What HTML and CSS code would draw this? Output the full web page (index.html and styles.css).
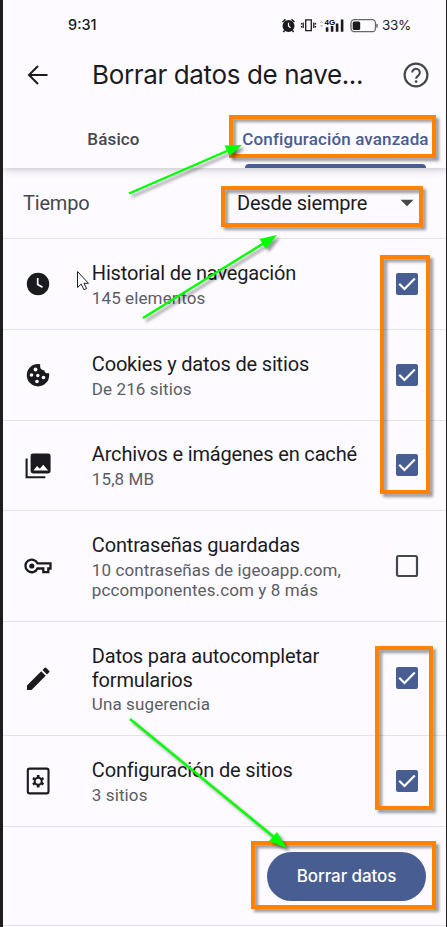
FILE: index.html
```html
<!DOCTYPE html>
<html lang="es">
<head>
<meta charset="utf-8">
<title>Borrar datos de navegación</title>
<link rel="stylesheet" href="styles.css">
</head>
<body>
<div class="screen">
  <header class="top">
    <div class="status">
      <span class="clock">9:31</span>
      <svg class="status-icons" width="100" height="20" viewBox="0 0 100 20">
        <circle cx="7.5" cy="11" r="6" fill="#1b1b1f"/>
        <path d="M1.500 7 4.500 4.400M10.500 4.400 13.500 7M3.500 15.500 2.500 17M11.500 15.500 12.500 17" stroke="#1b1b1f" stroke-width="1.500" fill="none"/>
        <path d="M7.500 7.800V11L9.500 12.800" stroke="#fff" stroke-width="1.200" fill="none"/>
        <path d="M24.700 4.900h5.600v10.800h-5.600zM22.200 7.500v5.500M32.800 7.500v5.500M20.500 8v1.500M20.500 11v1.500M34.500 8v1.500M34.500 11v1.500" stroke="#1b1b1f" stroke-width="1.300" fill="none"/>
        <path d="M38.500 8 40.500 5.500 42.500 8M38.500 10 40.500 12.500 42.500 10" fill="#c8c8cd"/>
        <text class="net" x="43.500" y="10">4G</text>
        <path d="M44.800 12.300h2.600v4.400h-2.600zM49.800 11h2.600v5.700h-2.600zM54.800 8.500h2.600v8.200h-2.600zM59.800 4.500h2.600v12.200h-2.600z" fill="#1b1b1f"/>
        <rect x="70" y="4.700" width="24.500" height="12" rx="3.500" fill="none" stroke="#68686c" stroke-width="1.300"/>
        <rect x="71.700" y="6.500" width="7.500" height="8.400" rx="1.500" fill="#1b1b1f"/>
        <path d="M96 9v3.500" stroke="#68686c" stroke-width="1.500"/>
      </svg>
      <span class="percent">33%</span>
    </div>
    <div class="appbar">
      <svg class="back" width="22" height="22" viewBox="0 0 22 22"><path d="M20.500 11H2.500M11 2 2 11l9 9" fill="none" stroke="#1b1b1f" stroke-width="2"/></svg>
      <h1 class="title">Borrar datos de nave...</h1>
      <svg class="help" width="26" height="26" viewBox="0 0 26 26"><circle cx="13" cy="13" r="11.400" fill="none" stroke="#44474e" stroke-width="2.200"/><path d="M9.200 10.500a3.800 3.800 0 1 1 6.300 2.900c-1.500 1.200-2.400 1.800-2.400 3.400" fill="none" stroke="#44474e" stroke-width="2.100"/><circle cx="13.100" cy="19.600" r="1.400" fill="#44474e"/></svg>
    </div>
    <nav class="tabs">
      <div class="tab">Básico</div>
      <div class="tab active">Configuración avanzada</div>
    </nav>
  </header>
  <main>
    <div class="time">
      <span class="time-label">Tiempo</span>
      <span class="time-value">Desde siempre</span>
      <svg class="caret" width="14" height="8" viewBox="0 0 14 8"><path d="M.5.800h13L7 7.200z" fill="#44474e"/></svg>
    </div>
    <section class="row">
      <svg class="icon" width="28" height="28" viewBox="0 0 28 28"><circle cx="14" cy="14" r="11.200" fill="#1b1b1f"/><path d="M13.700 8v6.500l4.800 2.800" fill="none" stroke="#fff" stroke-width="1.700"/></svg>
      <div class="copy"><div class="name">Historial de navegación</div><div class="detail">145 elementos</div></div>
      <svg class="box" width="24" height="24" viewBox="0 0 24 24"><rect x="1" y="1" width="22" height="22" rx="2" fill="#485d92"/><path d="M4.200 11.800 9.500 17 19.800 6.600" fill="none" stroke="#fff" stroke-width="2.200"/></svg>
    </section>
    <section class="row">
      <svg class="icon" width="28" height="28" viewBox="0 0 28 28"><path d="M14 3a11.200 11.200 0 1 0 11.200 11.200c0-.9-.1-1.500-.3-2.200-2.400 1-4.700-.5-4.400-2.700-3 .3-5-2-4.200-6Q15 3 14 3z" fill="#1b1b1f"/><g fill="#fff"><circle cx="11.500" cy="8.500" r="1.900"/><circle cx="7.500" cy="14" r="1.800"/><circle cx="13.800" cy="14.500" r="1.700"/><circle cx="19.500" cy="16.500" r="1.800"/><circle cx="13" cy="20.500" r="1.800"/></g></svg>
      <div class="copy"><div class="name">Cookies y datos de sitios</div><div class="detail">De 216 sitios</div></div>
      <svg class="box" width="24" height="24" viewBox="0 0 24 24"><rect x="1" y="1" width="22" height="22" rx="2" fill="#485d92"/><path d="M4.200 11.800 9.500 17 19.800 6.600" fill="none" stroke="#fff" stroke-width="2.200"/></svg>
    </section>
    <section class="row short">
      <svg class="icon" width="28" height="28" viewBox="0 0 28 28"><path d="M2.600 6.500v18.700h18.700" fill="none" stroke="#1b1b1f" stroke-width="2.100"/><rect x="6.600" y="1.500" width="20" height="20" rx="2.400" fill="#1b1b1f"/><path d="m9.500 18.500 3.500-4.500 2.800 2.800 3.400-4 5 5.700z" fill="#fff"/></svg>
      <div class="copy"><div class="name">Archivos e imágenes en caché</div><div class="detail">15,8 MB</div></div>
      <svg class="box" width="24" height="24" viewBox="0 0 24 24"><rect x="1" y="1" width="22" height="22" rx="2" fill="#485d92"/><path d="M4.200 11.800 9.500 17 19.800 6.600" fill="none" stroke="#fff" stroke-width="2.200"/></svg>
    </section>
    <section class="row passwords">
      <svg class="icon" width="28" height="28" viewBox="0 0 28 28"><path d="M13.500 11.300h13v5.200h-2.200v3.600h-5v-3.600h-5.800a6.300 6.300 0 1 1 0-5.200z" fill="none" stroke="#1b1b1f" stroke-width="2.300"/><circle cx="7.800" cy="14" r="2.600" fill="#1b1b1f"/></svg>
      <div class="copy"><div class="name">Contraseñas guardadas</div><div class="detail">10 contraseñas de igeoapp.com,<br>pccomponentes.com y 8 más</div></div>
      <svg class="box" width="24" height="24" viewBox="0 0 24 24"><rect x="2" y="2" width="20" height="20" rx="1.500" fill="none" stroke="#44474e" stroke-width="2.200"/></svg>
    </section>
    <section class="row forms">
      <svg class="icon" width="28" height="28" viewBox="0 0 28 28"><path d="M3 20.500 17.200 6.300l4.500 4.500L7.500 25H3zM18.500 5l2.200-2.200q.7-.7 1.400 0l3.100 3.100q.7.700 0 1.400L23 9.500z" fill="#1b1b1f"/></svg>
      <div class="copy"><div class="name">Datos para autocompletar<br>formularios</div><div class="detail">Una sugerencia</div></div>
      <svg class="box" width="24" height="24" viewBox="0 0 24 24"><rect x="1" y="1" width="22" height="22" rx="2" fill="#485d92"/><path d="M4.200 11.800 9.500 17 19.800 6.600" fill="none" stroke="#fff" stroke-width="2.200"/></svg>
    </section>
    <section class="row">
      <svg class="icon" width="28" height="28" viewBox="0 0 28 28"><rect x="3.800" y="1.600" width="20.700" height="24.800" rx="1.800" fill="none" stroke="#1b1b1f" stroke-width="2.100"/><circle cx="14.200" cy="14.200" r="3.500" fill="none" stroke="#1b1b1f" stroke-width="2"/><g stroke="#1b1b1f" stroke-width="2.700"><path d="M14.200 8v2.500M14.200 17.900v2.500M8.900 11.100l2.100 1.200M17.400 16.100l2.100 1.200M8.900 17.300l2.100-1.200M17.400 12.300l2.100-1.200"/></g></svg>
      <div class="copy"><div class="name">Configuración de sitios</div><div class="detail">3 sitios</div></div>
      <svg class="box" width="24" height="24" viewBox="0 0 24 24"><rect x="1" y="1" width="22" height="22" rx="2" fill="#485d92"/><path d="M4.200 11.800 9.500 17 19.800 6.600" fill="none" stroke="#fff" stroke-width="2.200"/></svg>
    </section>
    <footer class="actions"><button class="clear">Borrar datos</button></footer>
  </main>
  <svg class="notes" width="447" height="927" viewBox="0 0 447 927">
    <g class="marks" fill="none" stroke="#ff8300" stroke-width="4">
      <rect x="231" y="117" width="203" height="39"/>
      <rect x="223" y="188" width="198" height="37"/>
      <rect x="382" y="257" width="46" height="235"/>
      <rect x="377" y="648" width="54" height="160"/>
      <rect x="253" y="843" width="181" height="64"/>
    </g>
    <g class="arrows" stroke="#00ff00" fill="#00ff00">
      <path d="M129 193.500 228 150.500M143 318 264 243M130 719 275 838" stroke-width="2.400" fill="none"/>
      <path d="M242 145 229.500 156 224.500 145.500zM277 235 266 249 259.500 239zM287 848.500 269 841 277 832z" stroke="none"/>
    </g>
    <path d="M77.500 271.500v16l3.700-3.400 2.700 5.600 2.700-1.200-2.600-5.200h4.500z" fill="#fff" stroke="#1b1b2b" stroke-width="1"/>
  </svg>
</div>
</body>
</html>
```
FILE: styles.css
```css
* { box-sizing: border-box; }
body { margin: 0; background: #fdfbff; font-family: Roboto, sans-serif; color: #1b1b1f; }
.screen { position: relative; width: 447px; height: 927px; overflow: hidden; border-left: 3px solid #1e1e1e; border-right: 1px solid #1e1e1e; }
.top { height: 168px; box-shadow: 0 1px 8px rgba(0,0,0,.25); display: flex; flex-direction: column; }
.status { height: 46px; padding: 4px 0 0 65px; display: flex; align-items: center; font: 500 14.500px/20px Inter, sans-serif; }
.clock { width: 213px; }
.percent { margin-left: 1px; font-size: 13.500px; font-weight: 400; letter-spacing: -.3px; }
.net { font: 700 8px "Liberation Sans", sans-serif; }
.appbar { height: 58px; display: flex; align-items: center; padding: 0 17px 0 24px; }
.title { margin: 0 0 0 43px; width: 311px; font: 400 26px/32px Inter, sans-serif; letter-spacing: -.36px; white-space: nowrap; }
.tabs { flex: 1; display: grid; grid-template-columns: 221px 223px; }
.tab { position: relative; padding-top: 24px; text-align: center; font-size: 17px; line-height: 22px; font-weight: 500; color: #44474e; letter-spacing: .13px; }
.tab.active { color: #485d92; white-space: nowrap; }
.tab.active::after { content: ""; position: absolute; left: 21px; bottom: 0; width: 181px; height: 4px; border-radius: 4px 4px 0 0; background: #485d92; }
.time { height: 71px; padding: 0 32px 0 20px; border-bottom: 1px solid #e3e3ec; display: flex; align-items: center; font-size: 20px; letter-spacing: -.2px; }
.time-label { width: 214px; color: #44474e; }
.time-value { flex: 1; }
.row { height: 91px; padding: 0 27.500px 0 20.500px; border-bottom: 1px solid #e3e3ec; display: grid; grid-template-columns: 28px 303px 24px; justify-content: space-between; align-items: center; }
.row.short { height: 90px; }
.row.passwords { height: 111px; }
.row.forms { height: 114px; }
.copy { align-self: start; padding: 23px 0 0 20.300px; white-space: nowrap; }
.row.short .copy { padding-top: 22px; }
.name { font-size: 20px; line-height: 23.500px; letter-spacing: -.17px; }
.detail { margin-top: 2px; font-size: 17px; line-height: 20.500px; letter-spacing: .11px; color: #5b5d64; }
.box { position: relative; top: -.5px; }
.actions { height: 99px; padding: 0 20px 0 0; border-bottom: 1px solid #e3e3ec; display: flex; justify-content: flex-end; align-items: center; }
.clear { width: 159px; height: 49px; padding: 0; border: 0; border-radius: 25px; background: #485d92; color: #fff; font: 500 17px Inter, sans-serif; letter-spacing: -.1px; }
.notes { position: absolute; left: -3px; top: 0; pointer-events: none; }
.marks, .arrows { filter: drop-shadow(3px 3px 1.500px rgba(0,0,0,.4)); }
```
